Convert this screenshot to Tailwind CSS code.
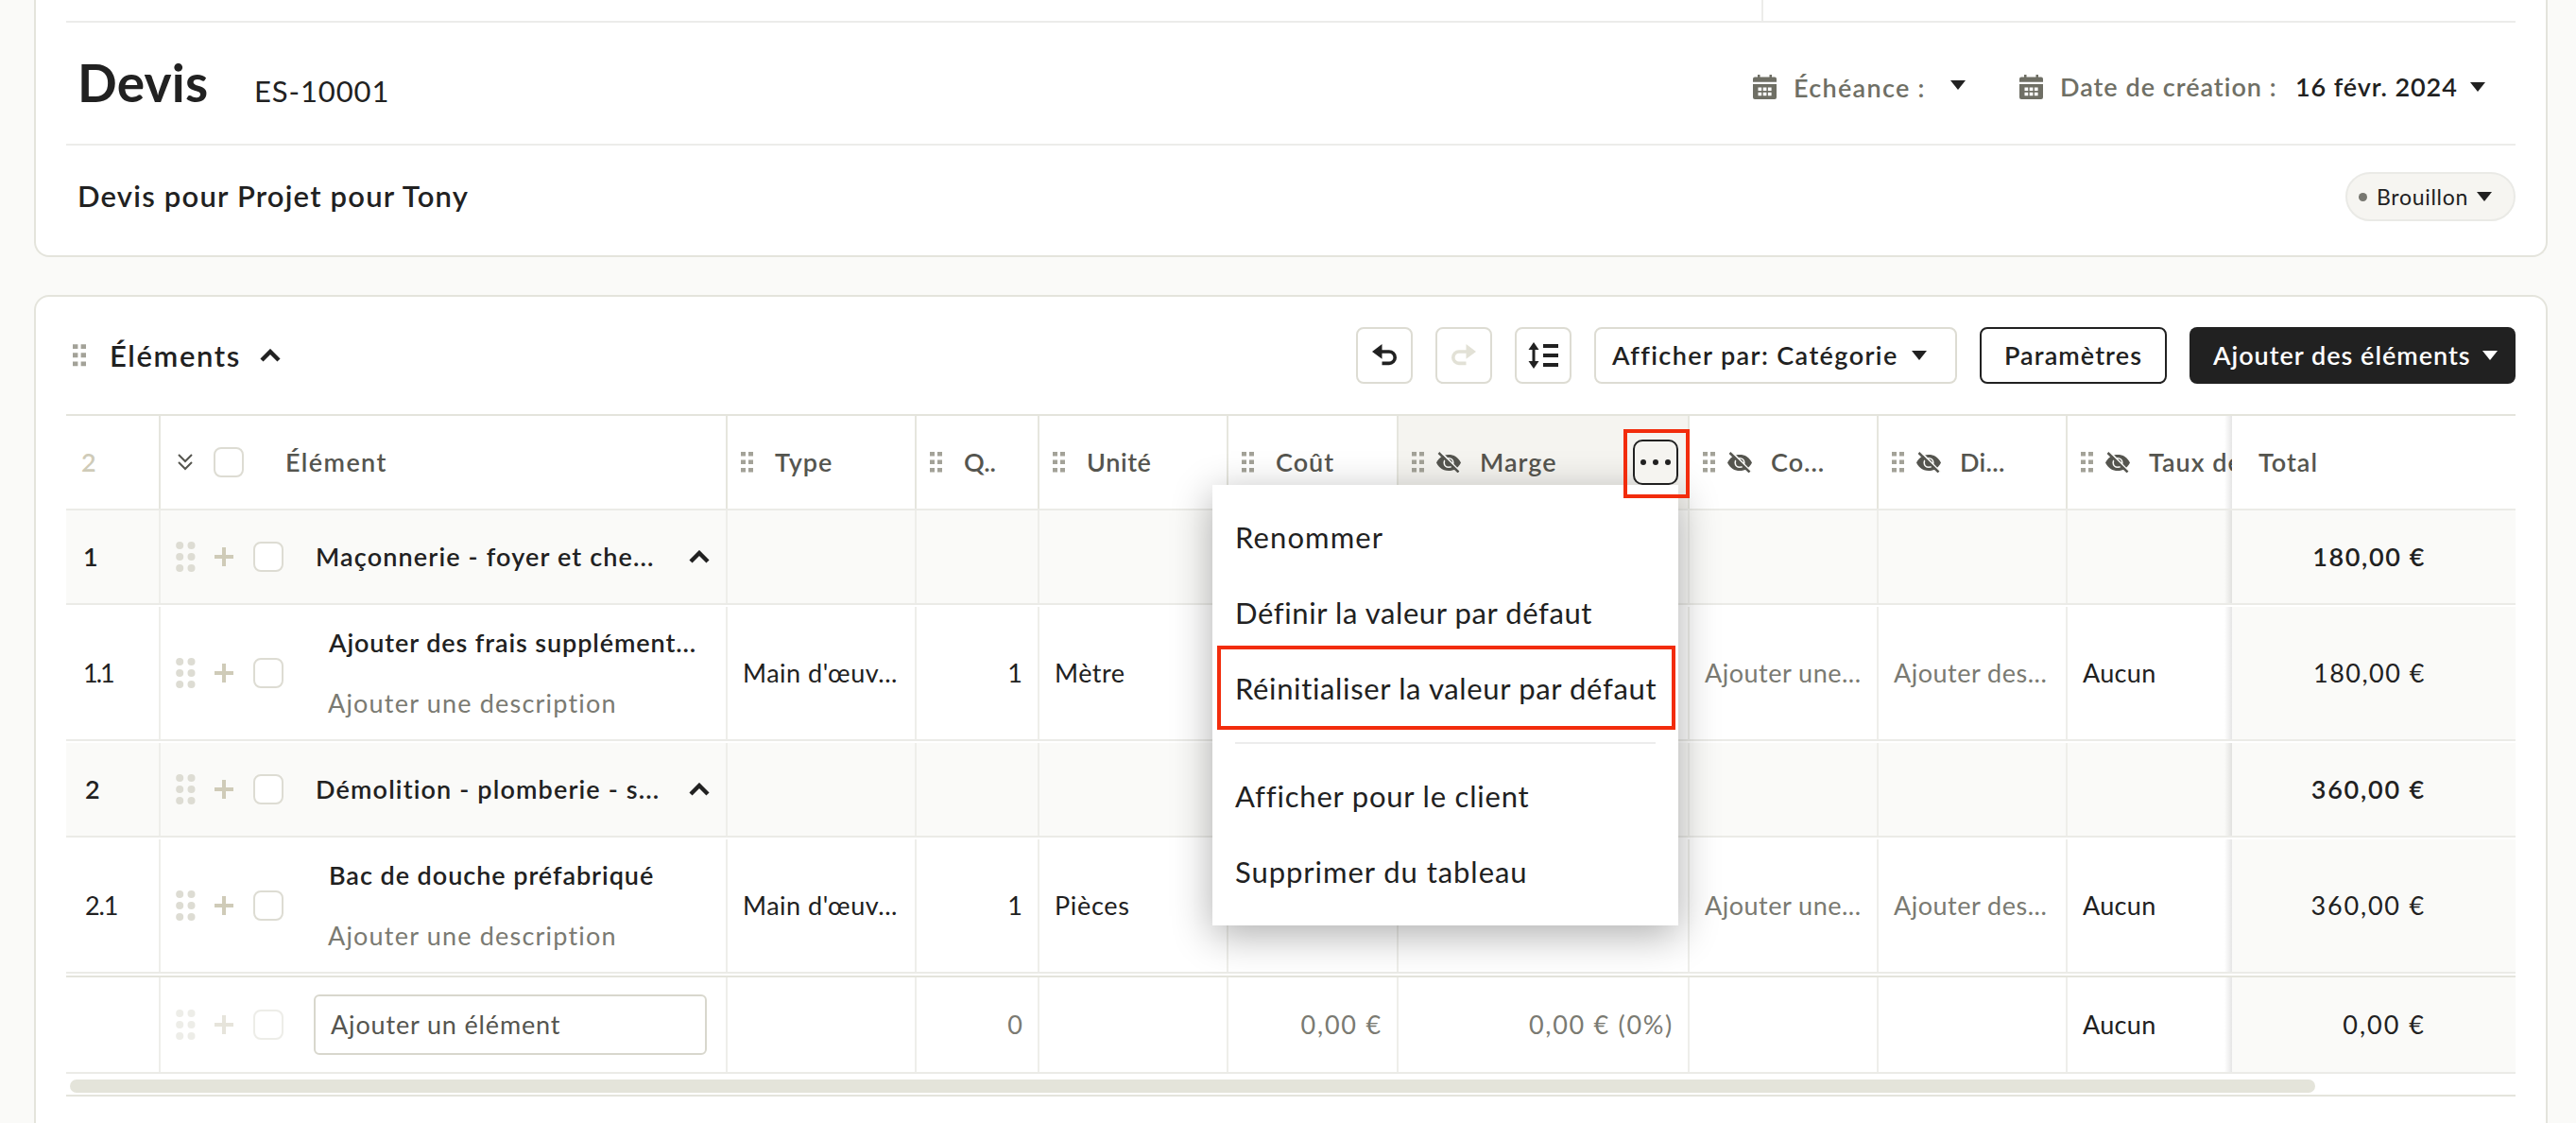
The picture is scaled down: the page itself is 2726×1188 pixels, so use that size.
<!DOCTYPE html>
<html lang="fr">

<head>
    <meta charset="UTF-8">
    <meta name="viewport" content="width=device-width, initial-scale=1.0">
    <title>Devis ES-10001</title>
    <script src="https://cdn.jsdelivr.net/npm/@tailwindcss/browser@4"></script>
</head>

<body class="bg-[#fafaf8] h-[1188px] overflow-hidden font-[Lato,'Liberation_Sans',sans-serif] text-[28px] leading-9 text-[#212121]">
    <!-- Icons -->
    <svg class="hidden">
        <symbol id="caret" viewBox="0 0 16 10"><path d="M0 0h16L8 10z" fill="currentColor" /></symbol>
        <symbol id="chevron-up" viewBox="0 0 22 14"><path d="M2 12l9-9 9 9" fill="none" stroke="currentColor" stroke-width="4.4" /></symbol>
        <symbol id="grip" viewBox="0 0 13 22">
            <path d="M0 0h5v4.5H0zM8 0h5v4.5H8zM0 8.5h5V13H0zM8 8.5h5V13H8zM0 17h5v4.500H0zM8 17h5v4.500H8z" fill="currentColor" />
        </symbol>
        <symbol id="dots" viewBox="0 0 21 32">
            <g fill="currentColor"><circle cx="4.200" cy="4" r="4" /><circle cx="16.500" cy="4" r="4" /><circle cx="4.200" cy="16" r="4" /><circle cx="16.500" cy="16" r="4" /><circle cx="4.200" cy="28" r="4" /><circle cx="16.500" cy="28" r="4" /></g>
        </symbol>
        <symbol id="plus" viewBox="0 0 20 20"><path d="M10 0v20M0 10h20" stroke="currentColor" stroke-width="4" /></symbol>
        <symbol id="calendar" viewBox="0 0 26 26">
            <path d="M5 0h2.500v2.500h10V0H20v2.500h3q2 0 2 2v3.200H0V4.500q0-2 2-2h3z" fill="currentColor" />
            <path d="M0 10h25v14q0 2-2 2H2q-2 0-2-2z" fill="currentColor" />
            <path d="M5.500 13.500h3.700v3.600H5.500zM10.700 13.500h3.700v3.600h-3.700zM15.900 13.500h3.700v3.600h-3.700zM5.500 18.700h3.700v3.600H5.500zM10.700 18.700h3.700v3.600h-3.700zM15.900 18.700h3.700v3.600h-3.700z" fill="#fff" />
        </symbol>
        <symbol id="eye-off" viewBox="0 0 26 22">
            <path d="M0 11.500C3 5.500 7.500 3 13 3s10 2.500 13 8.500C23 17.500 18.500 20 13 20S3 17.500 0 11.500z" fill="currentColor" />
            <circle cx="13" cy="11.500" r="4.800" fill="none" stroke="#fafaf8" stroke-width="1.600" />
            <path d="M5 0.500L25.500 21.500" stroke="#fafaf8" stroke-width="2" />
            <path d="M2.500 1L23.500 21.500" stroke="currentColor" stroke-width="2.500" />
        </symbol>
        <symbol id="undo" viewBox="0 0 26 24">
            <path d="M0 8L10.500 0v15.800z" fill="currentColor" />
            <path d="M10 8h8a6.200 6.200 0 0 1 0 12.400h-7.500" fill="none" stroke="currentColor" stroke-width="3.600" />
        </symbol>
        <symbol id="chevrons-down" viewBox="0 0 16 18"><path d="M1 1l7 7 7-7M1 9l7 7 7-7" fill="none" stroke="currentColor" stroke-width="2" /></symbol>
    </svg>

    <!-- Quote header -->
    <div class="ml-9 w-[2660px] h-[272px] px-8 bg-white border-2 border-t-0 border-[#e4e4dc] rounded-b-2xl">
        <div class="h-6 border-b-2 border-[#ececea]">
            <div class="ml-[1794px] w-0.5 h-[22px] bg-[#ececea]"></div>
        </div>
        <div class="h-[130px] border-b-2 border-[#ececea] flex items-center justify-between">
            <div class="flex items-baseline pl-3 pb-0.5">
                <h1 class="text-[55px] leading-[64px] font-bold w-[187px] tracking-[0.2px]">Devis</h1>
                <span class="text-[31px] tracking-[0.9px]">ES-10001</span>
            </div>
            <div class="flex items-center pr-8 pt-2 font-semibold text-[27px] text-[#6f6f65]">
                <svg class="w-[26px] h-[26px] mr-[17px]"><use href="#calendar" /></svg>
                <span class="w-[166px] tracking-[1.3px] pt-0.5">Échéance :</span>
                <svg class="w-4 h-2.5 mr-[57px] -mt-1 text-[#212121]"><use href="#caret" /></svg>
                <svg class="w-[26px] h-[26px] mr-[17px]"><use href="#calendar" /></svg>
                <span class="w-[249px] tracking-[1px]">Date de création :</span>
                <span class="w-[185px] text-[#212121] tracking-[0.9px]">16 févr. 2024</span>
                <svg class="w-4 h-2.5 text-[#212121]"><use href="#caret" /></svg>
            </div>
        </div>
        <div class="h-[108px] flex items-center justify-between">
            <h2 class="pl-3 pb-0.5 text-[31px] font-semibold tracking-[1.2px]">Devis pour Projet pour Tony</h2>
            <button class="w-[180px] h-[52px] pl-3 flex items-center rounded-full border-2 border-[#eaeae6] bg-[#f6f5f1] text-[23px]">
                <span class="size-[9px] mr-[10px] rounded-full bg-[#777770]"></span>
                <span class="w-[106px] text-left tracking-[0.7px]">Brouillon</span>
                <svg class="w-4 h-2.5"><use href="#caret" /></svg>
            </button>
        </div>
    </div>

    <!-- Items -->
    <div class="mt-10 ml-9 w-[2660px] h-[900px] px-8 bg-white border-2 border-[#e4e4dc] rounded-2xl">
        <div class="h-[124px] flex items-center justify-between">
            <div class="flex items-center pl-[7px]">
                <svg class="w-[14px] h-6 mr-[25px] text-[#a3a298]"><use href="#grip" /></svg>
                <h3 class="w-[159px] text-[31px] font-semibold tracking-[1.6px]">Éléments</h3>
                <svg class="w-[22px] h-[14px]"><use href="#chevron-up" /></svg>
            </div>
            <div class="flex gap-6 font-semibold text-[27px]">
                <button class="size-[60px] grid place-items-center border-2 border-[#dddcd3] rounded-lg">
                    <svg class="w-[26px] h-6"><use href="#undo" /></svg>
                </button>
                <button class="size-[60px] grid place-items-center border-2 border-[#dddcd3] rounded-lg text-[#e2e1d6]">
                    <svg class="w-[26px] h-6 -scale-x-100"><use href="#undo" /></svg>
                </button>
                <button class="size-[60px] grid place-items-center border-2 border-[#dddcd3] rounded-lg">
                    <svg class="w-8 h-7" viewBox="0 0 32 28" fill="currentColor">
                        <path d="M6 0l5.500 8H7.500v12H11.500l-5.500 8-5.500-8h4V8H0.500zM16 2h16v4H16zM16 12h16v4H16zM16 22h16v4H16z" />
                    </svg>
                </button>
                <button class="w-[384px] h-[60px] pl-[17px] flex items-center border-2 border-[#dddcd3] rounded-lg">
                    <span class="w-[317px] text-left tracking-[1.4px]">Afficher par: Catégorie</span>
                    <svg class="w-4 h-2.5"><use href="#caret" /></svg>
                </button>
                <button class="w-[198px] h-[60px] border-2 border-[#212121] rounded-lg tracking-[1.1px]">Paramètres</button>
                <button class="w-[345px] h-[60px] pl-[25px] flex items-center bg-[#212121] text-white rounded-lg">
                    <span class="w-[285px] text-left tracking-[1px]">Ajouter des éléments</span>
                    <svg class="w-4 h-2.5"><use href="#caret" /></svg>
                </button>
            </div>
        </div>

        <div class="border-y-2 border-[#e4e4dc] text-[27px]">
            <!-- Column titles -->
            <div class="h-[100px] grid grid-cols-[100px_600px_200px_130px_200px_180px_308px_200px_200px_174px_300px] border-b-2 border-[#ebebe7] font-semibold text-[#55554f] tracking-[1px]">
                <div class="flex items-center pl-4 border-r-2 border-[#e6e6de] text-[#cfcbb8]">2</div>
                <div class="flex items-center pl-[18px] border-r-2 border-[#e6e6de] tracking-[1.4px]">
                    <svg class="w-4 h-[18px] mr-[22px]"><use href="#chevrons-down" /></svg>
                    <span class="size-8 mr-11 border-2 border-[#dddcd3] rounded-lg bg-white"></span>
                    Élément
                </div>
                <div class="flex items-center pl-[14px] border-r-2 border-[#e6e6de]"><svg class="w-[13px] h-[22px] mr-[23px] text-[#a3a298]"><use href="#grip" /></svg>Type</div>
                <div class="flex items-center pl-[14px] border-r-2 border-[#e6e6de] tracking-normal"><svg class="w-[13px] h-[22px] mr-[23px] text-[#a3a298]"><use href="#grip" /></svg>Q..</div>
                <div class="flex items-center pl-[14px] border-r-2 border-[#e6e6de] tracking-[0.6px]"><svg class="w-[13px] h-[22px] mr-[23px] text-[#a3a298]"><use href="#grip" /></svg>Unité</div>
                <div class="flex items-center pl-[14px] border-r-2 border-[#e6e6de]"><svg class="w-[13px] h-[22px] mr-[23px] text-[#a3a298]"><use href="#grip" /></svg>Coût</div>
                <div class="relative z-20 flex items-center pl-[14px] border-r-2 border-[#e6e6de] bg-[#f5f4f0]">
                    <svg class="w-[13px] h-[22px] mr-[13px] text-[#a3a298]"><use href="#grip" /></svg>
                    <svg class="w-[26px] h-[22px] mr-5"><use href="#eye-off" /></svg>Marge
                    <!-- Column menu -->
                    <div class="absolute left-[-197px] top-[73px] w-[493px] py-4 bg-white text-[#212121] text-[31px] font-normal shadow-[0_10px_40px_rgba(0,0,0,0.32)]">
                        <div class="h-20 px-6 pb-0.5 flex items-center tracking-[1.1px]">Renommer</div>
                        <div class="h-20 px-6 pb-0.5 flex items-center tracking-[0.6px]">Définir la valeur par défaut</div>
                        <div class="relative h-20 px-6 pb-0.5 flex items-center whitespace-nowrap tracking-[0.65px]">Réinitialiser la valeur par défaut
                            <div class="absolute left-[5px] top-[-6px] w-[485px] h-[89px] border-4 border-[#f22c0c]"></div>
                        </div>
                        <div class="mx-6 my-4 h-0.5 bg-[#ececec]"></div>
                        <div class="h-20 px-6 pb-0.5 flex items-center tracking-[0.8px]">Afficher pour le client</div>
                        <div class="h-20 px-6 pb-0.5 flex items-center tracking-[0.95px]">Supprimer du tableau</div>
                    </div>
                    <button class="absolute left-[248px] top-[25px] size-12 flex items-center justify-center gap-[7px] border-2 border-[#212121] rounded-[10px] bg-[#f5f4f0] text-[#212121]">
                        <span class="size-1.5 rounded-full bg-current"></span>
                        <span class="size-1.5 rounded-full bg-current"></span>
                        <span class="size-1.5 rounded-full bg-current"></span>
                    </button>
                    <div class="absolute left-[238px] top-[14px] w-[70px] h-[73px] border-4 border-[#f22c0c]"></div>
                </div>
                <div class="flex items-center pl-[14px] border-r-2 border-[#e6e6de]">
                    <svg class="w-[13px] h-[22px] mr-[13px] text-[#a3a298]"><use href="#grip" /></svg>
                    <svg class="w-[26px] h-[22px] mr-5"><use href="#eye-off" /></svg>Co...
                </div>
                <div class="flex items-center pl-[14px] border-r-2 border-[#e6e6de] tracking-[0.3px]">
                    <svg class="w-[13px] h-[22px] mr-[13px] text-[#a3a298]"><use href="#grip" /></svg>
                    <svg class="w-[26px] h-[22px] mr-5"><use href="#eye-off" /></svg>Di...
                </div>
                <div class="flex items-center pl-[14px] overflow-hidden whitespace-nowrap">
                    <svg class="w-[13px] h-[22px] mr-[13px] shrink-0 text-[#a3a298]"><use href="#grip" /></svg>
                    <svg class="w-[26px] h-[22px] mr-5 shrink-0"><use href="#eye-off" /></svg>Taux de
                </div>
                <div class="relative flex items-center pl-7 bg-white before:absolute before:-left-2 before:inset-y-0 before:w-2 before:bg-linear-to-r before:from-transparent before:to-black/10">Total</div>
            </div>

            <!-- Group 1 -->
            <div class="h-[100px] grid grid-cols-[100px_600px_200px_130px_200px_180px_308px_200px_200px_174px_300px] border-b-2 border-[#ebebe7] bg-[#fafaf8] font-semibold">
                <div class="flex items-center pl-[18px] border-r-2 border-[#eeeeea]">1</div>
                <div class="flex items-center pl-4 border-r-2 border-[#eeeeea]">
                    <svg class="w-[21px] h-8 mr-5 text-[#dddcd3]"><use href="#dots" /></svg>
                    <svg class="size-5 mr-[21px] text-[#cfcbb8]"><use href="#plus" /></svg>
                    <span class="size-8 mr-[34px] border-2 border-[#dddcd3] rounded-lg bg-white"></span>
                    <span class="w-[395px] tracking-[1.15px]">Maçonnerie - foyer et che...</span>
                    <svg class="w-[22px] h-[14px]"><use href="#chevron-up" /></svg>
                </div>
                <div class="border-r-2 border-[#eeeeea]"></div>
                <div class="border-r-2 border-[#eeeeea]"></div>
                <div class="border-r-2 border-[#eeeeea]"></div>
                <div class="border-r-2 border-[#eeeeea]"></div>
                <div class="border-r-2 border-[#eeeeea]"></div>
                <div class="border-r-2 border-[#eeeeea]"></div>
                <div class="border-r-2 border-[#eeeeea]"></div>
                <div></div>
                <div class="relative flex items-center justify-end pr-[95px] tracking-[1.6px] bg-[#fafaf8] before:absolute before:-left-2 before:inset-y-0 before:w-2 before:bg-linear-to-r before:from-transparent before:to-black/10">180,00 €</div>
            </div>

            <!-- Item 1.1 -->
            <div class="h-36 pt-0.5 grid grid-cols-[100px_600px_200px_130px_200px_180px_308px_200px_200px_174px_300px] border-b-2 border-[#ebebe7]">
                <div class="flex items-center pl-[18px] border-r-2 border-[#eeeeea] tracking-[-2px]">1.1</div>
                <div class="flex items-center pl-4 border-r-2 border-[#eeeeea]">
                    <svg class="w-[21px] h-8 mr-5 text-[#dddcd3]"><use href="#dots" /></svg>
                    <svg class="size-5 mr-[21px] text-[#cfcbb8]"><use href="#plus" /></svg>
                    <span class="size-8 mr-12 border-2 border-[#dddcd3] rounded-lg bg-white"></span>
                    <div class="flex flex-col gap-7">
                        <span class="font-semibold tracking-[0.9px]">Ajouter des frais supplément...</span>
                        <span class="-ml-px text-[#7a7a72] tracking-[1.2px]">Ajouter une description</span>
                    </div>
                </div>
                <div class="flex items-center pl-4 border-r-2 border-[#eeeeea] tracking-[0.5px]">Main d'œuv...</div>
                <div class="flex items-center justify-end pr-4 border-r-2 border-[#eeeeea]">1</div>
                <div class="flex items-center pl-4 border-r-2 border-[#eeeeea] tracking-[0.5px]">Mètre</div>
                <div class="border-r-2 border-[#eeeeea]"></div>
                <div class="border-r-2 border-[#eeeeea]"></div>
                <div class="flex items-center pl-4 border-r-2 border-[#eeeeea] text-[#7a7a72] tracking-[0.5px]">Ajouter une...</div>
                <div class="flex items-center pl-4 border-r-2 border-[#eeeeea] text-[#7a7a72] tracking-[0.5px]">Ajouter des...</div>
                <div class="flex items-center pl-4 tracking-[0.3px]">Aucun</div>
                <div class="relative flex items-center justify-end pr-[95px] tracking-[1.5px] bg-[#fafaf8] before:absolute before:-left-2 before:inset-y-0 before:w-2 before:bg-linear-to-r before:from-transparent before:to-black/10">180,00 €</div>
            </div>

            <!-- Group 2 -->
            <div class="h-[102px] pt-0.5 grid grid-cols-[100px_600px_200px_130px_200px_180px_308px_200px_200px_174px_300px] border-b-2 border-[#ebebe7] bg-[#fafaf8] bg-clip-content font-semibold">
                <div class="flex items-center pl-5 border-r-2 border-[#eeeeea]">2</div>
                <div class="flex items-center pl-4 border-r-2 border-[#eeeeea]">
                    <svg class="w-[21px] h-8 mr-5 text-[#dddcd3]"><use href="#dots" /></svg>
                    <svg class="size-5 mr-[21px] text-[#cfcbb8]"><use href="#plus" /></svg>
                    <span class="size-8 mr-[34px] border-2 border-[#dddcd3] rounded-lg bg-white"></span>
                    <span class="w-[395px] tracking-[1.15px]">Démolition - plomberie - s...</span>
                    <svg class="w-[22px] h-[14px]"><use href="#chevron-up" /></svg>
                </div>
                <div class="border-r-2 border-[#eeeeea]"></div>
                <div class="border-r-2 border-[#eeeeea]"></div>
                <div class="border-r-2 border-[#eeeeea]"></div>
                <div class="border-r-2 border-[#eeeeea]"></div>
                <div class="border-r-2 border-[#eeeeea]"></div>
                <div class="border-r-2 border-[#eeeeea]"></div>
                <div class="border-r-2 border-[#eeeeea]"></div>
                <div></div>
                <div class="relative flex items-center justify-end pr-[95px] tracking-[1.8px] bg-[#fafaf8] before:absolute before:-left-2 before:inset-y-0 before:w-2 before:bg-linear-to-r before:from-transparent before:to-black/10">360,00 €</div>
            </div>

            <!-- Item 2.1 -->
            <div class="h-36 pt-0.5 grid grid-cols-[100px_600px_200px_130px_200px_180px_308px_200px_200px_174px_300px] border-b-2 border-[#ebebe7]">
                <div class="flex items-center pl-5 border-r-2 border-[#eeeeea] tracking-[-1.2px]">2.1</div>
                <div class="flex items-center pl-4 border-r-2 border-[#eeeeea]">
                    <svg class="w-[21px] h-8 mr-5 text-[#dddcd3]"><use href="#dots" /></svg>
                    <svg class="size-5 mr-[21px] text-[#cfcbb8]"><use href="#plus" /></svg>
                    <span class="size-8 mr-12 border-2 border-[#dddcd3] rounded-lg bg-white"></span>
                    <div class="flex flex-col gap-7">
                        <span class="font-semibold tracking-[0.95px]">Bac de douche préfabriqué</span>
                        <span class="-ml-px text-[#7a7a72] tracking-[1.2px]">Ajouter une description</span>
                    </div>
                </div>
                <div class="flex items-center pl-4 border-r-2 border-[#eeeeea] tracking-[0.5px]">Main d'œuv...</div>
                <div class="flex items-center justify-end pr-4 border-r-2 border-[#eeeeea]">1</div>
                <div class="flex items-center pl-4 border-r-2 border-[#eeeeea] tracking-[0.7px]">Pièces</div>
                <div class="border-r-2 border-[#eeeeea]"></div>
                <div class="border-r-2 border-[#eeeeea]"></div>
                <div class="flex items-center pl-4 border-r-2 border-[#eeeeea] text-[#7a7a72] tracking-[0.5px]">Ajouter une...</div>
                <div class="flex items-center pl-4 border-r-2 border-[#eeeeea] text-[#7a7a72] tracking-[0.5px]">Ajouter des...</div>
                <div class="flex items-center pl-4 tracking-[0.3px]">Aucun</div>
                <div class="relative flex items-center justify-end pr-[95px] tracking-[1.8px] bg-[#fafaf8] before:absolute before:-left-2 before:inset-y-0 before:w-2 before:bg-linear-to-r before:from-transparent before:to-black/10">360,00 €</div>
            </div>

            <!-- New item -->
            <div class="mt-0.5 h-[104px] grid grid-cols-[100px_600px_200px_130px_200px_180px_308px_200px_200px_174px_300px] border-t-2 border-t-[#e4e4dc] border-b-2 border-b-[#ebebe7]">
                <div class="border-r-2 border-[#eeeeea]"></div>
                <div class="flex items-center pl-4 border-r-2 border-[#eeeeea]">
                    <svg class="w-[21px] h-8 mr-5 text-[#dddcd3] opacity-50"><use href="#dots" /></svg>
                    <svg class="size-5 mr-[21px] text-[#cfcbb8] opacity-50"><use href="#plus" /></svg>
                    <span class="size-8 mr-8 border-2 border-[#dddcd3] rounded-lg bg-white opacity-50"></span>
                    <div class="w-[416px] h-16 pl-4 flex items-center border-2 border-[#d8d7cd] rounded-md text-[#55554f] tracking-[0.85px]">Ajouter un élément</div>
                </div>
                <div class="border-r-2 border-[#eeeeea]"></div>
                <div class="flex items-center justify-end pr-4 border-r-2 border-[#eeeeea] text-[#7a7a72]">0</div>
                <div class="border-r-2 border-[#eeeeea]"></div>
                <div class="flex items-center justify-end pr-[15px] border-r-2 border-[#eeeeea] text-[#7a7a72] tracking-[1.8px]">0,00 €</div>
                <div class="flex items-center justify-end pr-[15px] border-r-2 border-[#eeeeea] text-[#7a7a72] tracking-[1.7px]">0,00 € (0%)</div>
                <div class="border-r-2 border-[#eeeeea]"></div>
                <div class="border-r-2 border-[#eeeeea]"></div>
                <div class="flex items-center pl-4 tracking-[0.3px]">Aucun</div>
                <div class="relative flex items-center justify-end pr-[95px] tracking-[2px] bg-[#fafaf8] before:absolute before:-left-2 before:inset-y-0 before:w-2 before:bg-linear-to-r before:from-transparent before:to-black/10">0,00 €</div>
            </div>

            <!-- Horizontal scrollbar -->
            <div class="h-[22px] pt-1.5 pl-1">
                <div class="w-[2376px] h-[14px] rounded-full bg-[#e4e4da]"></div>
            </div>
        </div>
    </div>
</body>

</html>
